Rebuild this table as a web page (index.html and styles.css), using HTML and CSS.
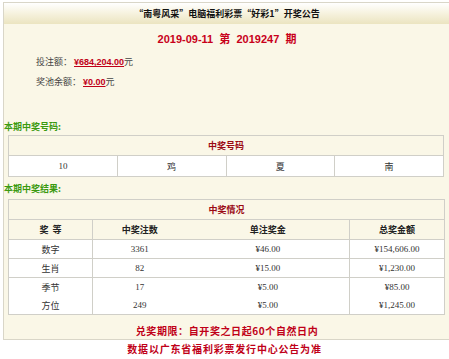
FILE: index.html
```html
<!DOCTYPE html>
<html lang="zh-CN">
<head>
<meta charset="utf-8">
<title>开奖公告</title>
<link rel="stylesheet" href="styles.css">
</head>
<body>
<div class="box">
  <div class="head">“南粤风采”电脑福利彩票“好彩1”开奖公告</div>
  <div class="date">2019-09-11&nbsp; 第&nbsp; 2019247&nbsp; 期</div>
  <div class="info">
    <p>投注额：<span class="amt">¥684,204.00</span>元</p>
    <p>奖池余额：<span class="amt">¥0.00</span>元</p>
  </div>
  <div class="label lab1">本期中奖号码:</div>
  <table class="t1">
    <tr class="th"><td colspan="4">中奖号码</td></tr>
    <tr class="row"><td>10</td><td>鸡</td><td>夏</td><td>南</td></tr>
  </table>
  <div class="label lab2">本期中奖结果:</div>
  <table class="t2">
    <colgroup><col class="c1"><col class="c2"><col class="c3"><col class="c4"></colgroup>
    <tr class="th"><td colspan="4">中奖情况</td></tr>
    <tr class="ch"><td class="vl">奖&nbsp;&nbsp;等</td><td>中奖注数</td><td class="vr">单注奖金</td><td>总奖金额</td></tr>
    <tr class="row hl"><td class="vl">数字</td><td>3361</td><td class="vr">¥46.00</td><td>¥154,606.00</td></tr>
    <tr class="row hl"><td class="vl">生肖</td><td>82</td><td class="vr">¥15.00</td><td>¥1,230.00</td></tr>
    <tr class="row"><td class="vl">季节</td><td>17</td><td class="vr">¥5.00</td><td>¥85.00</td></tr>
    <tr class="row"><td class="vl">方位</td><td>249</td><td class="vr">¥5.00</td><td>¥1,245.00</td></tr>
  </table>
  <div class="foot">兑奖期限：自开奖之日起60个自然日内</div>
</div>
<div class="foot2">数据以广东省福利彩票发行中心公告为准</div>
</body>
</html>
```
FILE: styles.css
```css
html, body {
  margin: 0;
  padding: 0;
  background: #ffffff;
  overflow: hidden;
}
body {
  width: 449px;
  height: 359px;
  font-family: "Noto Sans CJK SC", "Liberation Sans", sans-serif;
  font-size: 9px;
  color: #333333;
}
.box {
  margin: 2px 0 0 3px;
  width: 446px;
  border: 1px solid #d9d6c8;
  border-right: none;
  background: #faf7e7;
}
.head {
  height: 21px;
  line-height: 21px;
  text-align: center;
  font-weight: bold;
  font-size: 9px;
  color: #111111;
  background: linear-gradient(to bottom, #ffffff 0%, #f6f2de 50%, #ebe4c0 100%);
}
.date {
  height: 28px;
  line-height: 30px;
  text-align: center;
  font-family: "Liberation Sans", "Noto Sans CJK SC", sans-serif;
  font-weight: bold;
  font-size: 11px;
  color: #c8001a;
}
.info {
  padding-left: 32px;
}
.info p {
  margin: 0;
  height: 20px;
  line-height: 20px;
  color: #444444;
}
.amt {
  color: #c00018;
  font-weight: bold;
  text-decoration: underline;
  font-family: "Liberation Sans", "Noto Sans CJK SC", sans-serif;
  font-size: 9px;
  margin-left: 2px;
}
.label {
  height: 12px;
  line-height: 12px;
  font-weight: bold;
  color: #3a9a10;
  font-size: 9px;
}
.lab1 {
  margin-top: 29px;
  margin-bottom: 2px;
}
.lab2 {
  margin-top: 6px;
  margin-bottom: 4px;
}
table {
  border-collapse: collapse;
  table-layout: fixed;
  margin-left: 4px;
  width: 436px;
  border: 1px solid #d0cfc8;
}
td {
  padding: 0;
  text-align: center;
  vertical-align: middle;
}
.th td {
  height: 19px;
  font-weight: bold;
  color: #9a0a14;
  border-bottom: 1px solid #d0cfc8;
}
.t1 .row td {
  height: 20px;
  background: #ffffff;
  border-left: 1px solid #d0cfc8;
  font-family: "Liberation Serif", "Noto Sans CJK SC", serif;
  color: #333333;
}
.t2 .c1 { width: 84px; }
.t2 .c2 { width: 94px; }
.t2 .c3 { width: 163px; }
.t2 .c4 { width: 95px; }
.t2 .ch td {
  height: 19px;
  font-weight: bold;
  color: #222222;
  border-bottom: 1px solid #d0cfc8;
}
.t2 .row td {
  height: 18px;
  background: #ffffff;
  font-family: "Liberation Serif", "Noto Sans CJK SC", serif;
  color: #333333;
}
.t2 .row.hl td {
  border-bottom: 1px solid #d0cfc8;
}
.t2 .vl {
  border-right: 1px solid #d0cfc8;
}
.t2 .vr {
  border-right: 1px solid #d0cfc8;
}
.foot {
  padding-top: 8px;
  height: 16px;
  line-height: 16px;
  text-align: center;
  font-weight: bold;
  font-size: 10px;
  letter-spacing: 0.6px;
  color: #c00018;
}
.foot2 {
  margin-top: 1px;
  height: 16px;
  line-height: 16px;
  text-align: center;
  font-weight: bold;
  font-size: 10px;
  letter-spacing: 0.8px;
  color: #c00018;
}
```
